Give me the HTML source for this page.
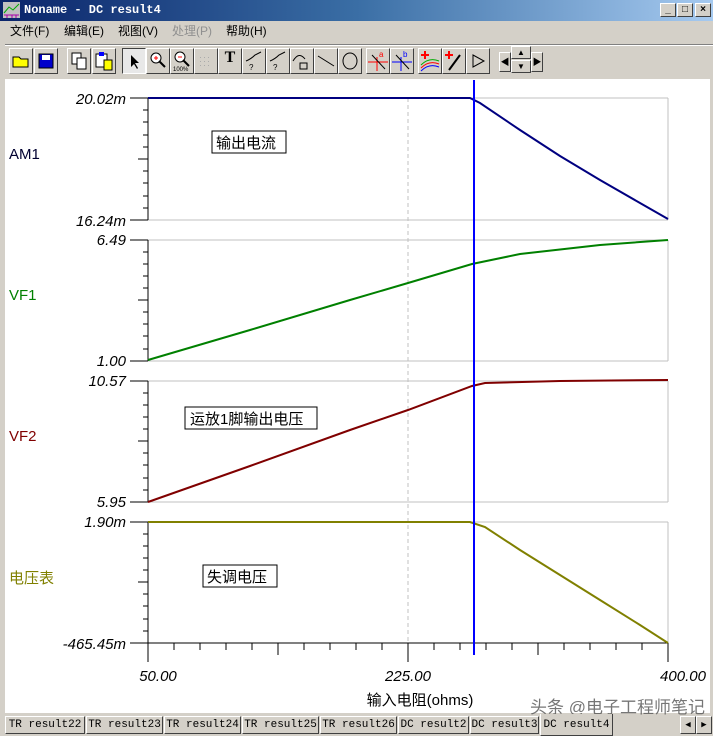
<!DOCTYPE html>
<html><head><meta charset="utf-8"><style>
*{margin:0;padding:0;box-sizing:border-box}
body{width:713px;height:736px;overflow:hidden;background:#d4d0c8;font-family:"Liberation Sans","Noto Sans CJK SC",sans-serif;position:relative}
.title{position:absolute;left:0;top:0;width:713px;height:21px;background:linear-gradient(90deg,#0a246a 0%,#3a6ea5 50%,#a6caf0 100%);}
.title span{position:absolute;left:24px;top:3px;color:#fff;font:bold 12px "Liberation Mono",monospace}
.wb{position:absolute;top:3px;width:16px;height:14px;background:#d4d0c8;border:1px solid;border-color:#fff #404040 #404040 #fff;font:bold 10px "Liberation Sans";text-align:center;line-height:12px}
.menu{position:absolute;top:22px;left:0;height:18px;font-size:12px}
.menu span{position:absolute;top:0;white-space:nowrap}
.tb{position:absolute;top:48px;height:26px;width:24px;border:1px solid;border-color:#fff #404040 #404040 #fff;background:#d4d0c8}
.plot{position:absolute;left:5px;top:79px;width:705px;height:634px;background:#fff}
.tab{position:absolute;top:716px;height:18px;border:1px solid;border-color:#fff #404040 #404040 #fff;font:11px "Liberation Mono",monospace;text-align:center;line-height:16px;background:#d4d0c8;white-space:nowrap;overflow:hidden}
</style></head><body>
<div class="title"><svg width="20" height="18" style="position:absolute;left:2px;top:1px"><rect x="1" y="1" width="17" height="16" fill="#c0c0c0"/><path d="M2 12 L7 6 L11 9 L17 3" stroke="#0a0" fill="none"/><path d="M2 14 H17 M5 14 V17 M10 14 V17 M14 14 V17" stroke="#a0a"/></svg><span>Noname - DC result4</span></div>
<div class="wb" style="left:660px">_</div><div class="wb" style="left:677px">□</div><div class="wb" style="left:695px">×</div>
<div class="menu"><span style="left:10px">文件(F)</span><span style="left:64px">编辑(E)</span><span style="left:118px">视图(V)</span><span style="left:172px;color:#909090">处理(P)</span><span style="left:226px">帮助(H)</span></div>
<div style="position:absolute;left:5px;top:44px;width:708px;border-top:1px solid #808080;border-bottom:1px solid #fff"></div>
<div class="tb" style="left:9px"><svg width="22" height="24"><path d="M3 8 H9 L11 10 H18 V18 H3Z" fill="#ff0" stroke="#000"/></svg></div>
<div class="tb" style="left:34px"><svg width="22" height="24"><rect x="4" y="5" width="14" height="14" fill="#00c" stroke="#000"/><rect x="7" y="6" width="8" height="5" fill="#fff"/></svg></div>
<div class="tb" style="left:67px"><svg width="22" height="24"><rect x="4" y="4" width="9" height="11" fill="#fff" stroke="#000"/><rect x="9" y="9" width="9" height="11" fill="#fff" stroke="#000"/></svg></div>
<div class="tb" style="left:92px"><svg width="22" height="24"><rect x="3" y="5" width="11" height="13" fill="#fff" stroke="#000"/><rect x="6" y="3" width="5" height="4" fill="#00f"/><rect x="11" y="11" width="8" height="10" fill="#ff0" stroke="#000"/></svg></div>
<div class="tb" style="left:122px;background:#e8e8e8;border-color:#404040 #fff #fff #404040"><svg width="22" height="24"><path d="M8 6 L8 18 L11 15 L14 20 L15 19 L12 14 L16 14Z" fill="#000"/></svg></div>
<div class="tb" style="left:146px"><svg width="22" height="24"><circle cx="9" cy="9" r="5" fill="#fff" stroke="#000"/><path d="M7 9H11M9 7V11" stroke="red"/><path d="M12 12 L18 18" stroke="#000" stroke-width="2"/></svg></div>
<div class="tb" style="left:170px"><svg width="22" height="24"><circle cx="9" cy="8" r="5" fill="#fff" stroke="#000"/><path d="M7 8H11" stroke="red"/><path d="M12 11 L18 17" stroke="#000" stroke-width="2"/><text x="2" y="22" font-size="6">100%</text></svg></div>
<div class="tb" style="left:194px"><svg width="22" height="24" fill="#aaa"><rect x="5" y="8" width="1" height="1"/><rect x="9" y="8" width="1" height="1"/><rect x="13" y="8" width="1" height="1"/><rect x="5" y="12" width="1" height="1"/><rect x="9" y="12" width="1" height="1"/><rect x="13" y="12" width="1" height="1"/><rect x="5" y="16" width="1" height="1"/><rect x="9" y="16" width="1" height="1"/><rect x="13" y="16" width="1" height="1"/></svg></div>
<div class="tb" style="left:218px;font:bold 16px 'Liberation Serif';text-align:center">T</div>
<div class="tb" style="left:242px"><svg width="22" height="24"><path d="M3 12 Q8 10 12 6 L18 3" stroke="#000" fill="none"/><text x="6" y="21" font-size="8">?</text></svg></div>
<div class="tb" style="left:266px"><svg width="22" height="24"><path d="M3 12 Q8 10 12 6 L18 3" stroke="#000" fill="none"/><text x="6" y="21" font-size="8">?</text></svg></div>
<div class="tb" style="left:290px"><svg width="22" height="24"><path d="M2 12 Q8 2 14 10" stroke="#000" fill="none"/><rect x="9" y="14" width="7" height="6" fill="none" stroke="#000"/></svg></div>
<div class="tb" style="left:314px"><svg width="22" height="24"><path d="M3 7 L19 17" stroke="#000"/></svg></div>
<div class="tb" style="left:338px"><svg width="22" height="24"><ellipse cx="11" cy="12" rx="7" ry="8" fill="none" stroke="#000"/></svg></div>
<div class="tb" style="left:366px"><svg width="22" height="24"><path d="M1 13H21M10 8V22" stroke="red"/><path d="M5 6 L18 20" stroke="#000"/><text x="12" y="8" font-size="8" fill="red">a</text></svg></div>
<div class="tb" style="left:390px"><svg width="22" height="24"><path d="M1 13H21M10 8V22" stroke="#00f"/><path d="M5 6 L18 20" stroke="#000"/><text x="12" y="8" font-size="8" fill="#00f">b</text></svg></div>
<div class="tb" style="left:418px"><svg width="22" height="24"><path d="M6 2V10M2 6H10" stroke="red" stroke-width="2"/><path d="M2 16Q10 8 20 12" stroke="#0a0" fill="none"/><path d="M2 19Q10 11 20 15" stroke="red" fill="none"/><path d="M2 22Q10 14 20 18" stroke="#00f" fill="none"/></svg></div>
<div class="tb" style="left:442px"><svg width="22" height="24"><path d="M6 2V10M2 6H10" stroke="red" stroke-width="2"/><path d="M6 21 L17 6" stroke="#000" stroke-width="2"/></svg></div>
<div class="tb" style="left:466px"><svg width="22" height="24"><path d="M6 6 L17 12 L6 18Z" fill="none" stroke="#000"/></svg></div>
<div class="tb" style="left:499px;width:12px;top:52px;height:20px;font-size:9px;line-height:18px;text-align:center">◀</div>
<div class="tb" style="left:511px;width:20px;height:13px;top:46px;font-size:8px;line-height:11px;text-align:center">▲</div>
<div class="tb" style="left:511px;width:20px;height:13px;top:60px;font-size:8px;line-height:11px;text-align:center">▼</div>
<div class="tb" style="left:531px;width:12px;top:52px;height:20px;font-size:9px;line-height:18px;text-align:center">▶</div>
<div class="plot"></div>
<svg width="713" height="736" style="position:absolute;left:0;top:0" font-family="Liberation Sans, Noto Sans CJK SC, sans-serif">
<g stroke="#c0c0c0" fill="none">
<path d="M148 98H668M148 220H668M148 240H668M148 361H668M148 381H668M148 502H668M148 522H668M668 98V220M668 240V361M668 381V502M668 522V643"/>
<path d="M408 98V643" stroke-dasharray="4,3"/>
</g>
<g stroke="#000" fill="none">
<path d="M148 98V220M148 240V361M148 381V502M148 522V662M130 98H148M130 220H148M130 240H148M130 361H148M130 381H148M130 502H148M130 522H148M130 643H668M138 159H148M138 300H148M138 441H148M138 582H148"/>
<path d="M143 110H148M143 122H148M143 135H148M143 147H148M143 171H148M143 183H148M143 196H148M143 208H148
M143 252H148M143 264H148M143 276H148M143 288H148M143 312H148M143 324H148M143 336H148M143 349H148
M143 393H148M143 405H148M143 417H148M143 429H148M143 453H148M143 465H148M143 478H148M143 490H148
M143 534H148M143 546H148M143 558H148M143 570H148M143 594H148M143 606H148M143 619H148M143 631H148"/>
<path d="M408 643V662M668 643V662M174 643V650M200 643V650M226 643V650M252 643V650M278 643V655M304 643V650M330 643V650M356 643V650M382 643V650M434 643V650M460 643V650M486 643V650M512 643V650M538 643V655M564 643V650M590 643V650M616 643V650M642 643V650"/>
</g>
<g fill="none" stroke-width="2">
<path d="M148 98H470L480 103L520 130L560 156L600 180L640 203L668 219" stroke="#000080"/>
<path d="M148 360L250 330L350 300L408 283L472 264L520 254L600 245L668 240" stroke="#008000"/>
<path d="M148 502L250 466L350 430L408 410L472 386L485 383L560 381L668 380" stroke="#800000"/>
<path d="M148 522H470L485 527L520 550L560 575L600 600L640 625L668 643" stroke="#808000"/>
</g>
<path d="M474 80V655" stroke="#0000ff" stroke-width="2"/>
<g font-size="15" font-style="italic" text-anchor="end" fill="#000">
<text x="126" y="104">20.02m</text><text x="126" y="226">16.24m</text>
<text x="126" y="245">6.49</text><text x="126" y="366">1.00</text>
<text x="126" y="386">10.57</text><text x="126" y="507">5.95</text>
<text x="126" y="527">1.90m</text><text x="126" y="649">-465.45m</text>
</g>
<g font-size="15" font-style="italic" text-anchor="middle">
<text x="158" y="681">50.00</text><text x="408" y="681">225.00</text><text x="683" y="681">400.00</text>
</g>
<text x="420" y="705" font-size="15" text-anchor="middle">输入电阻(ohms)</text>
<g font-size="15"><text x="9" y="159" fill="#000030">AM1</text><text x="9" y="300" fill="#008000">VF1</text><text x="9" y="441" fill="#800000">VF2</text><text x="9" y="583" fill="#808000">电压表</text></g>
<g font-size="15" fill="#000">
<rect x="212" y="131" width="74" height="22" fill="#fff" stroke="#000"/><text x="216" y="148">输出电流</text>
<rect x="185" y="407" width="132" height="22" fill="#fff" stroke="#000"/><text x="190" y="424">运放1脚输出电压</text>
<rect x="203" y="565" width="74" height="22" fill="#fff" stroke="#000"/><text x="207" y="582">失调电压</text>
</g>
<text x="530" y="713" font-size="17" fill="#555" opacity="0.8">头条 @电子工程师笔记</text>
</svg>
<div class="tab" style="left:5px;width:80px">TR result22</div>
<div class="tab" style="left:86px;width:77px">TR result23</div>
<div class="tab" style="left:164px;width:77px">TR result24</div>
<div class="tab" style="left:242px;width:77px">TR result25</div>
<div class="tab" style="left:320px;width:77px">TR result26</div>
<div class="tab" style="left:398px;width:71px">DC result2</div>
<div class="tab" style="left:470px;width:69px">DC result3</div>
<div class="tab" style="left:540px;width:73px;top:714px;height:22px;border-top:none;line-height:22px">DC result4</div>
<div class="tab" style="left:680px;width:16px;font-size:9px">◀</div>
<div class="tab" style="left:696px;width:16px;font-size:9px">▶</div>
</body></html>
